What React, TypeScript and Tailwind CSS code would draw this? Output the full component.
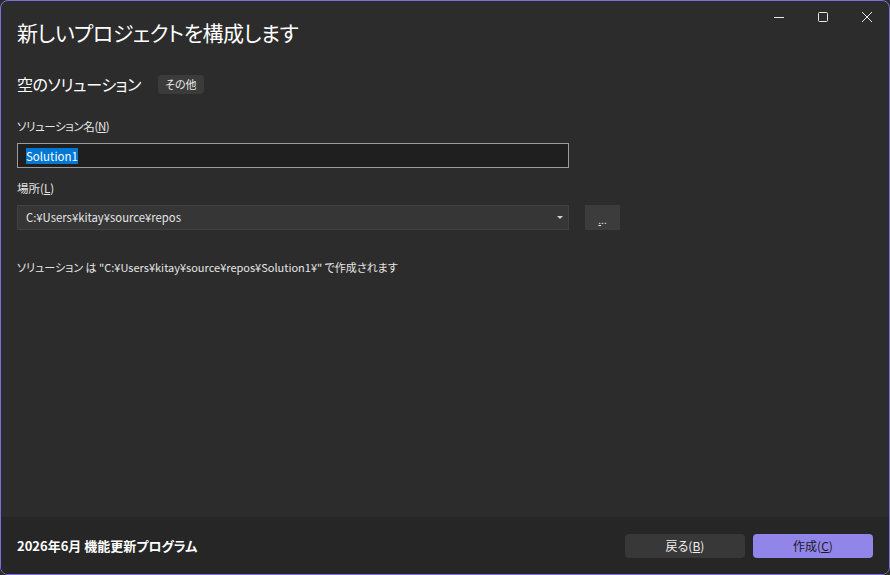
import React from "react";

function WinControls() {
  return (
    <div className="absolute top-0 right-0 flex h-[32px] items-center">
      <div className="flex h-[32px] w-[44px] items-center justify-center">
        <svg width="12" height="12" viewBox="0 0 12 12">
          <path d="M1 6.5h10" stroke="#e8e8e8" strokeWidth="1" fill="none" />
        </svg>
      </div>
      <div className="flex h-[32px] w-[44px] items-center justify-center">
        <svg width="12" height="12" viewBox="0 0 12 12">
          <rect x="1.5" y="1.5" width="9" height="9" rx="1" stroke="#e8e8e8" strokeWidth="1" fill="none" />
        </svg>
      </div>
      <div className="flex h-[32px] w-[44px] items-center justify-center">
        <svg width="12" height="12" viewBox="0 0 12 12">
          <path d="M1 1L11 11M11 1L1 11" stroke="#e8e8e8" strokeWidth="1" fill="none" />
        </svg>
      </div>
    </div>
  );
}

export default function App() {
  const font = "font-['Noto_Sans_CJK_JP','Noto_Sans',sans-serif] [font-feature-settings:'palt']";
  return (
    <div className={`w-[890px] h-[575px] bg-[#2c2c2c] ${font}`}>
      <div className="relative flex h-full w-full flex-col overflow-hidden rounded-[8px] border border-[#7b6fd9] bg-[#2c2c2c]">
        <WinControls />
        <div className="flex flex-1 flex-col px-4 pt-[16px]">
          <h1 className="text-[21px] leading-[30px] tracking-[-0.5px] text-white">新しいプロジェクトを構成します</h1>
          <div className="mt-[27px] flex h-[20px] items-center">
            <span className="text-[16px] leading-[20px] tracking-[-0.4px] text-white">空のソリューション</span>
            <span className="ml-[17px] flex h-[19px] items-center rounded-[4px] bg-[#3b3b3b] px-[7px] text-[11px] text-[#e8e8e8]">
              その他
            </span>
          </div>
          <div className="mt-[24px] text-[11.5px] leading-[16px] tracking-[-0.4px] text-[#e6e6e6]">
            ソリューション名(<span className="underline">N</span>)
          </div>
          <div className="mt-[9px] flex h-[25px] w-[552px] items-center border border-[#9b9b9b] bg-[#1f1f1f] pl-[8px]">
            <span className="bg-[#0078d4] text-[11.5px] leading-[16px] text-white">Solution1</span>
          </div>
          <div className="mt-[12px] text-[11.5px] leading-[16px] text-[#e6e6e6]">
            場所(<span className="underline">L</span>)
          </div>
          <div className="mt-[9px] flex items-center">
            <div className="flex h-[25px] w-[552px] items-center justify-between border border-[#414141] bg-[#363636] pl-[8px] pr-[5px]">
              <span className="text-[11.3px] text-[#e6e6e6]">C:¥Users¥kitay¥source¥repos</span>
              <svg width="6" height="4" viewBox="0 0 6 4">
                <path d="M0 0h6L3 3z" fill="#d0d0d0" />
              </svg>
            </div>
            <div className="ml-[16px] flex h-[25px] w-[35px] items-end justify-center bg-[#3c3c3c] pb-[5px] text-[10px] leading-[10px] text-[#e6e6e6]">
              <span>
                <span className="underline">.</span>..
              </span>
            </div>
          </div>
          <div className="mt-[29px] text-[11px] leading-[16px] text-[#e6e6e6]">
            ソリューション は "C:¥Users¥kitay¥source¥repos¥Solution1¥" で作成されます
          </div>
        </div>
        <div className="flex h-[57px] items-center justify-between bg-[#262626] pl-4 pr-4">
          <span className="text-[13px] font-bold text-white">2026年6月 機能更新プログラム</span>
          <div className="flex gap-[8px]">
            <button className="flex h-[24px] w-[120px] items-center justify-center rounded-[4px] bg-[#383838] text-[12px] text-[#f0f0f0]">
              戻る(<span className="underline">B</span>)
            </button>
            <button className="flex h-[24px] w-[120px] items-center justify-center rounded-[4px] bg-[#9185ea] text-[12px] text-[#1b1b1b]">
              作成(<span className="underline">C</span>)
            </button>
          </div>
        </div>
      </div>
    </div>
  );
}
